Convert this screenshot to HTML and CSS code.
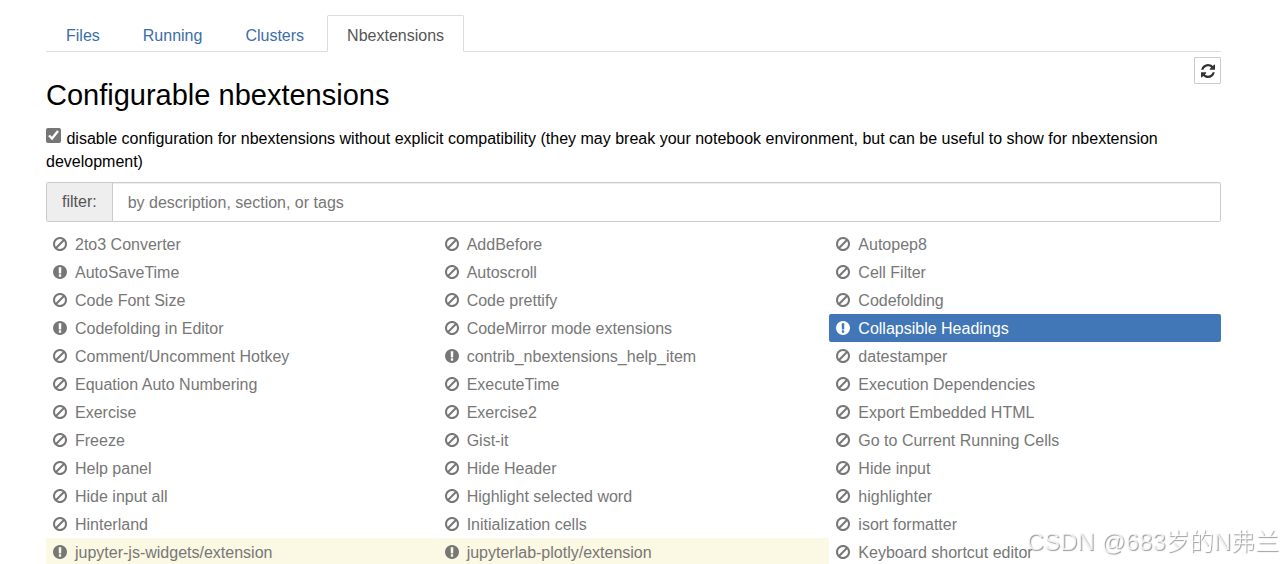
FILE: index.html
```html
<!DOCTYPE html>
<html lang="en">
<head>
    <meta charset="UTF-8">
    <meta name="viewport" content="width=device-width, initial-scale=1.0">
    <title>Configurable nbextensions</title>
    <link rel="stylesheet" href="styles.css">
</head>
<body>
    <svg class="sprite" aria-hidden="true">
        <symbol id="ban" viewBox="128 128 1536 1536">
            <path d="M1440 893q0-161-87-295l-754 753q137 89 297 89 111 0 211.5-43.5t173.5-116.5 116-174.5 43-212.500zm-999 299l755-754q-135-91-300-91-148 0-273 73t-198 199-73 274q0 162 89 299zm1223-299q0 157-61 300t-163.5 246-245 164-298.5 61-298.5-61-245-164-163.5-246-61-300 61-299.5 163.5-245.5 245-164 298.5-61 298.5 61 245 164 163.5 245.5 61 299.5z"/>
        </symbol>
        <symbol id="alert" viewBox="128 128 1536 1536">
            <path d="M896 128q209 0 385.5 103t279.5 279.5 103 385.5-103 385.5-279.5 279.5-385.5 103-385.5-103-279.5-279.5-103-385.5 103-385.5 279.5-279.5 385.5-103zm128 1247v-190q0-14-9-23.5t-22-9.5h-192q-13 0-23 10t-10 23v190q0 13 10 23t23 10h192q13 0 22-9.5t9-23.5zm-2-344l18-621q0-12-10-18-10-8-24-8h-220q-14 0-24 8-10 6-10 18l17 621q0 10 10 17.5t24 7.5h185q14 0 23.5-7.5t10.5-17.5z"/>
        </symbol>
        <symbol id="refresh" viewBox="128 128 1536 1536">
            <path d="M1639 1056q0 5-1 7-64 268-268 434.5t-478 166.5q-146 0-282.5-55t-243.5-157l-129 129q-19 19-45 19t-45-19-19-45v-448q0-26 19-45t45-19h448q26 0 45 19t19 45-19 45l-137 137q71 66 161 102t187 36q134 0 250-65t186-179q11-17 53-117 8-23 30-23h192q13 0 22.5 9.5t9.5 22.5zm25-800v448q0 26-19 45t-45 19h-448q-26 0-45-19t-19-45 19-45l138-138q-148-137-349-137-134 0-250 65t-186 179q-11 17-53 117-8 23-30 23h-199q-13 0-22.5-9.5t-9.5-22.5v-7q65-268 270-434.5t480-166.500q146 0 284 55.5t245 156.5l130-129q19-19 45-19t45 19 19 45z"/>
        </symbol>
    </svg>

    <div class="container">
        <nav class="tabs">
            <a href="#files">Files</a>
            <a href="#running">Running</a>
            <a href="#clusters">Clusters</a>
            <a href="#nbextensions" class="active">Nbextensions</a>
        </nav>

        <div class="title-row">
            <h1>Configurable nbextensions</h1>
            <button type="button" class="refresh" aria-label="Refresh"><svg class="icon"><use href="#refresh"/></svg></button>
        </div>

        <div class="compat">
            <input type="checkbox" id="compat" checked>
            <label for="compat">disable configuration for nbextensions without explicit compatibility (they may break your notebook environment, but can be useful to show for nbextension development)</label>
        </div>

        <div class="filter">
            <label for="filter">filter:</label>
            <input type="text" id="filter" placeholder="by description, section, or tags">
        </div>

        <ul class="ext-list">
            <li><a href="#"><svg class="icon"><use href="#ban"/></svg>2to3 Converter</a></li>
            <li><a href="#"><svg class="icon"><use href="#ban"/></svg>AddBefore</a></li>
            <li><a href="#"><svg class="icon"><use href="#ban"/></svg>Autopep8</a></li>
            <li><a href="#"><svg class="icon"><use href="#alert"/></svg>AutoSaveTime</a></li>
            <li><a href="#"><svg class="icon"><use href="#ban"/></svg>Autoscroll</a></li>
            <li><a href="#"><svg class="icon"><use href="#ban"/></svg>Cell Filter</a></li>
            <li><a href="#"><svg class="icon"><use href="#ban"/></svg>Code Font Size</a></li>
            <li><a href="#"><svg class="icon"><use href="#ban"/></svg>Code prettify</a></li>
            <li><a href="#"><svg class="icon"><use href="#ban"/></svg>Codefolding</a></li>
            <li><a href="#"><svg class="icon"><use href="#alert"/></svg>Codefolding in Editor</a></li>
            <li><a href="#"><svg class="icon"><use href="#ban"/></svg>CodeMirror mode extensions</a></li>
            <li><a href="#" class="selected"><svg class="icon"><use href="#alert"/></svg>Collapsible Headings</a></li>
            <li><a href="#"><svg class="icon"><use href="#ban"/></svg>Comment/Uncomment Hotkey</a></li>
            <li><a href="#"><svg class="icon"><use href="#alert"/></svg>contrib_nbextensions_help_item</a></li>
            <li><a href="#"><svg class="icon"><use href="#ban"/></svg>datestamper</a></li>
            <li><a href="#"><svg class="icon"><use href="#ban"/></svg>Equation Auto Numbering</a></li>
            <li><a href="#"><svg class="icon"><use href="#ban"/></svg>ExecuteTime</a></li>
            <li><a href="#"><svg class="icon"><use href="#ban"/></svg>Execution Dependencies</a></li>
            <li><a href="#"><svg class="icon"><use href="#ban"/></svg>Exercise</a></li>
            <li><a href="#"><svg class="icon"><use href="#ban"/></svg>Exercise2</a></li>
            <li><a href="#"><svg class="icon"><use href="#ban"/></svg>Export Embedded HTML</a></li>
            <li><a href="#"><svg class="icon"><use href="#ban"/></svg>Freeze</a></li>
            <li><a href="#"><svg class="icon"><use href="#ban"/></svg>Gist-it</a></li>
            <li><a href="#"><svg class="icon"><use href="#ban"/></svg>Go to Current Running Cells</a></li>
            <li><a href="#"><svg class="icon"><use href="#ban"/></svg>Help panel</a></li>
            <li><a href="#"><svg class="icon"><use href="#ban"/></svg>Hide Header</a></li>
            <li><a href="#"><svg class="icon"><use href="#ban"/></svg>Hide input</a></li>
            <li><a href="#"><svg class="icon"><use href="#ban"/></svg>Hide input all</a></li>
            <li><a href="#"><svg class="icon"><use href="#ban"/></svg>Highlight selected word</a></li>
            <li><a href="#"><svg class="icon"><use href="#ban"/></svg>highlighter</a></li>
            <li><a href="#"><svg class="icon"><use href="#ban"/></svg>Hinterland</a></li>
            <li><a href="#"><svg class="icon"><use href="#ban"/></svg>Initialization cells</a></li>
            <li><a href="#"><svg class="icon"><use href="#ban"/></svg>isort formatter</a></li>
            <li><a href="#" class="unconfigured"><svg class="icon"><use href="#alert"/></svg>jupyter-js-widgets/extension</a></li>
            <li><a href="#" class="unconfigured"><svg class="icon"><use href="#alert"/></svg>jupyterlab-plotly/extension</a></li>
            <li><a href="#"><svg class="icon"><use href="#ban"/></svg>Keyboard shortcut editor</a></li>
        </ul>
    </div>

    <div class="watermark">CSDN @683岁的N弗兰</div>
</body>
</html>
```

FILE: styles.css
```css
*{
    box-sizing: border-box;
}
body{
    margin: 0;
    background-color: white;
    color: black;
    font-family: "Liberation Sans", Arial, sans-serif;
    font-size: 16px;
    line-height: 23px;
}
a{
    color: #337ab7;
    text-decoration: none;
}
.sprite{
    display: none;
}
.icon{
    width: 14px;
    height: 14px;
    fill: currentColor;
    flex: none;
}

.container{
    padding: 15px 61px 0 46px;
}

.tabs{
    display: flex;
    gap: 3px;
    border-bottom: 1px solid #ddd;
}
.tabs a{
    padding: 8px 19px;
    height: 37px;
    line-height: 23px;
    margin-bottom: -1px;
    border: 1px solid transparent;
    border-radius: 2px 2px 0 0;
    color: #3b6ea8;
}
.tabs a.active{
    color: #555;
    background-color: white;
    border-color: #ddd;
    border-bottom-color: white;
}

.title-row{
    display: flex;
    justify-content: space-between;
    align-items: flex-start;
    padding-top: 5px;
}
h1{
    margin: 22px 0 16px;
    font-size: 29px;
    font-weight: normal;
    line-height: 32px;
}
.refresh{
    display: flex;
    align-items: center;
    justify-content: center;
    width: 27px;
    height: 27px;
    padding: 0;
    color: #333;
    background-color: white;
    border: 1px solid #ccc;
    border-radius: 1px;
}

.compat input{
    width: 15px;
    height: 15px;
    margin: 0 1px 0 0;
    vertical-align: 1px;
    accent-color: #767676;
}

.filter{
    display: flex;
    height: 40px;
    margin: 9px 0 8px;
    border: 1px solid #ccc;
    border-radius: 2px;
}
.filter label{
    padding: 0 15px;
    line-height: 38px;
    color: #555;
    background-color: #eee;
    border-right: 1px solid #ccc;
}
.filter input{
    flex: 1;
    padding: 0 15px;
    font: inherit;
    color: #555;
    border: none;
    outline: none;
    box-shadow: inset 0 1px 1px rgba(0, 0, 0, 0.075);
}
.filter input::placeholder{
    color: #777;
}

.ext-list{
    display: grid;
    grid-template-columns: repeat(3, 1fr);
    margin: 0;
    padding: 0;
    list-style: none;
}
.ext-list a{
    display: flex;
    align-items: center;
    gap: 8px;
    height: 28px;
    padding: 0 7px;
    color: #777;
    border-radius: 2px;
}
.ext-list a.selected{
    color: white;
    background-color: #4277b7;
}
.ext-list a.unconfigured{
    background-color: #fbf8e3;
}

/* lies over the bottom right corner of the page */
.watermark{
    position: fixed;
    right: 3px;
    bottom: 6px;
    font-family: "Liberation Sans", "Noto Sans CJK SC", sans-serif;
    font-size: 24px;
    font-weight: 300;
    line-height: 32px;
    color: rgba(255, 255, 255, 0.8);
    text-shadow: 1px 1px 1px rgba(0, 0, 0, 0.4);
    pointer-events: none;
}
```
